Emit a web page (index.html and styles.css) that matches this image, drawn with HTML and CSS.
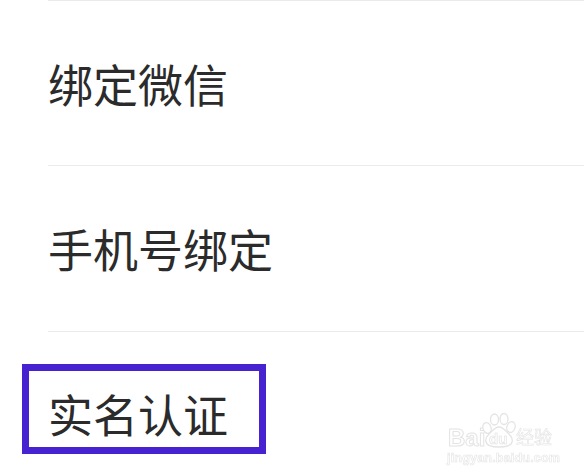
FILE: index.html
```html
<!DOCTYPE html>
<html lang="zh-CN">
<head>
<meta charset="utf-8">
<title>账号设置</title>
<link rel="stylesheet" href="styles.css">
</head>
<body>
<main class="list">
  <div class="row">绑定微信</div>
  <div class="row">手机号绑定</div>
  <div class="row">实名认证</div>
</main>
<div class="highlight"></div>
<div class="watermark">
  <div class="wm-top">
    <span class="wm-bai">Bai</span>
    <svg class="wm-paw" viewBox="0 0 34 35" width="34" height="35" aria-hidden="true">
      <g fill="#fff" stroke="#e4e4e4" stroke-width="1.3">
        <ellipse cx="5" cy="15" rx="4" ry="5.5" transform="rotate(-20 5 15)"/>
        <ellipse cx="12.5" cy="6.5" rx="4" ry="5.5"/>
        <ellipse cx="22" cy="6" rx="4" ry="5.5"/>
        <ellipse cx="29" cy="14" rx="4" ry="5.5" transform="rotate(20 29 14)"/>
        <path d="M17 14c-4 0-7 4-10 7-3 3-4 5-3 8 1 4 6 5 13 5s12-1 13-5c1-3 0-5-3-8-3-3-6-7-10-7z"/>
      </g>
    </svg>
    <span class="wm-du">du</span>
    <span class="wm-jy">经验</span>
  </div>
  <div class="wm-url">jingyan.baidu.com</div>
</div>
</body>
</html>
```
FILE: styles.css
```css
html, body {
  margin: 0;
  padding: 0;
  height: 100%;
  background: #fff;
  overflow: hidden;
}
body {
  position: relative;
  font-family: "Noto Sans CJK SC", "Noto Sans", sans-serif;
}
.list {
  margin-left: 48px;
  border-top: 1px solid #ebebeb;
}
.row {
  height: 164.4px;
  display: flex;
  align-items: center;
  font-size: 45px;
  line-height: 1;
  color: #2b2b2b;
  border-bottom: 1px solid #ebebeb;
}
.row:last-child {
  border-bottom: 0;
}
.highlight {
  position: absolute;
  left: 22px;
  top: 364px;
  width: 244px;
  height: 90px;
  box-sizing: border-box;
  border: 7px solid #4722d0;
}
.watermark {
  position: absolute;
  left: 447px;
  top: 413px;
  width: 106px;
  color: #fff;
  font-family: "Liberation Sans", "Noto Sans CJK SC", sans-serif;
  filter: blur(0.4px);
}
.wm-top {
  position: relative;
  height: 38px;
}
.wm-bai {
  position: absolute;
  left: 1px;
  top: 13px;
  font-size: 24px;
  font-weight: 700;
  line-height: 1;
  -webkit-text-stroke: 1px #e4e4e4;
}
.wm-paw {
  position: absolute;
  left: 35px;
  top: 0;
}
.wm-du {
  position: absolute;
  left: 42px;
  top: 18px;
  font-size: 15px;
  font-weight: 700;
  line-height: 1;
  -webkit-text-stroke: 0.6px #e0e0e0;
}
.wm-jy {
  position: absolute;
  left: 69px;
  top: 14px;
  font-size: 18px;
  line-height: 1;
  font-family: "Noto Sans CJK SC", sans-serif;
  -webkit-text-stroke: 0.6px #e4e4e4;
}
.wm-url {
  font-size: 12.5px;
  font-weight: 700;
  letter-spacing: 0.2px;
  line-height: 14px;
  margin-top: 0;
  white-space: nowrap;
  -webkit-text-stroke: 0.6px #e4e4e4;
}
```
